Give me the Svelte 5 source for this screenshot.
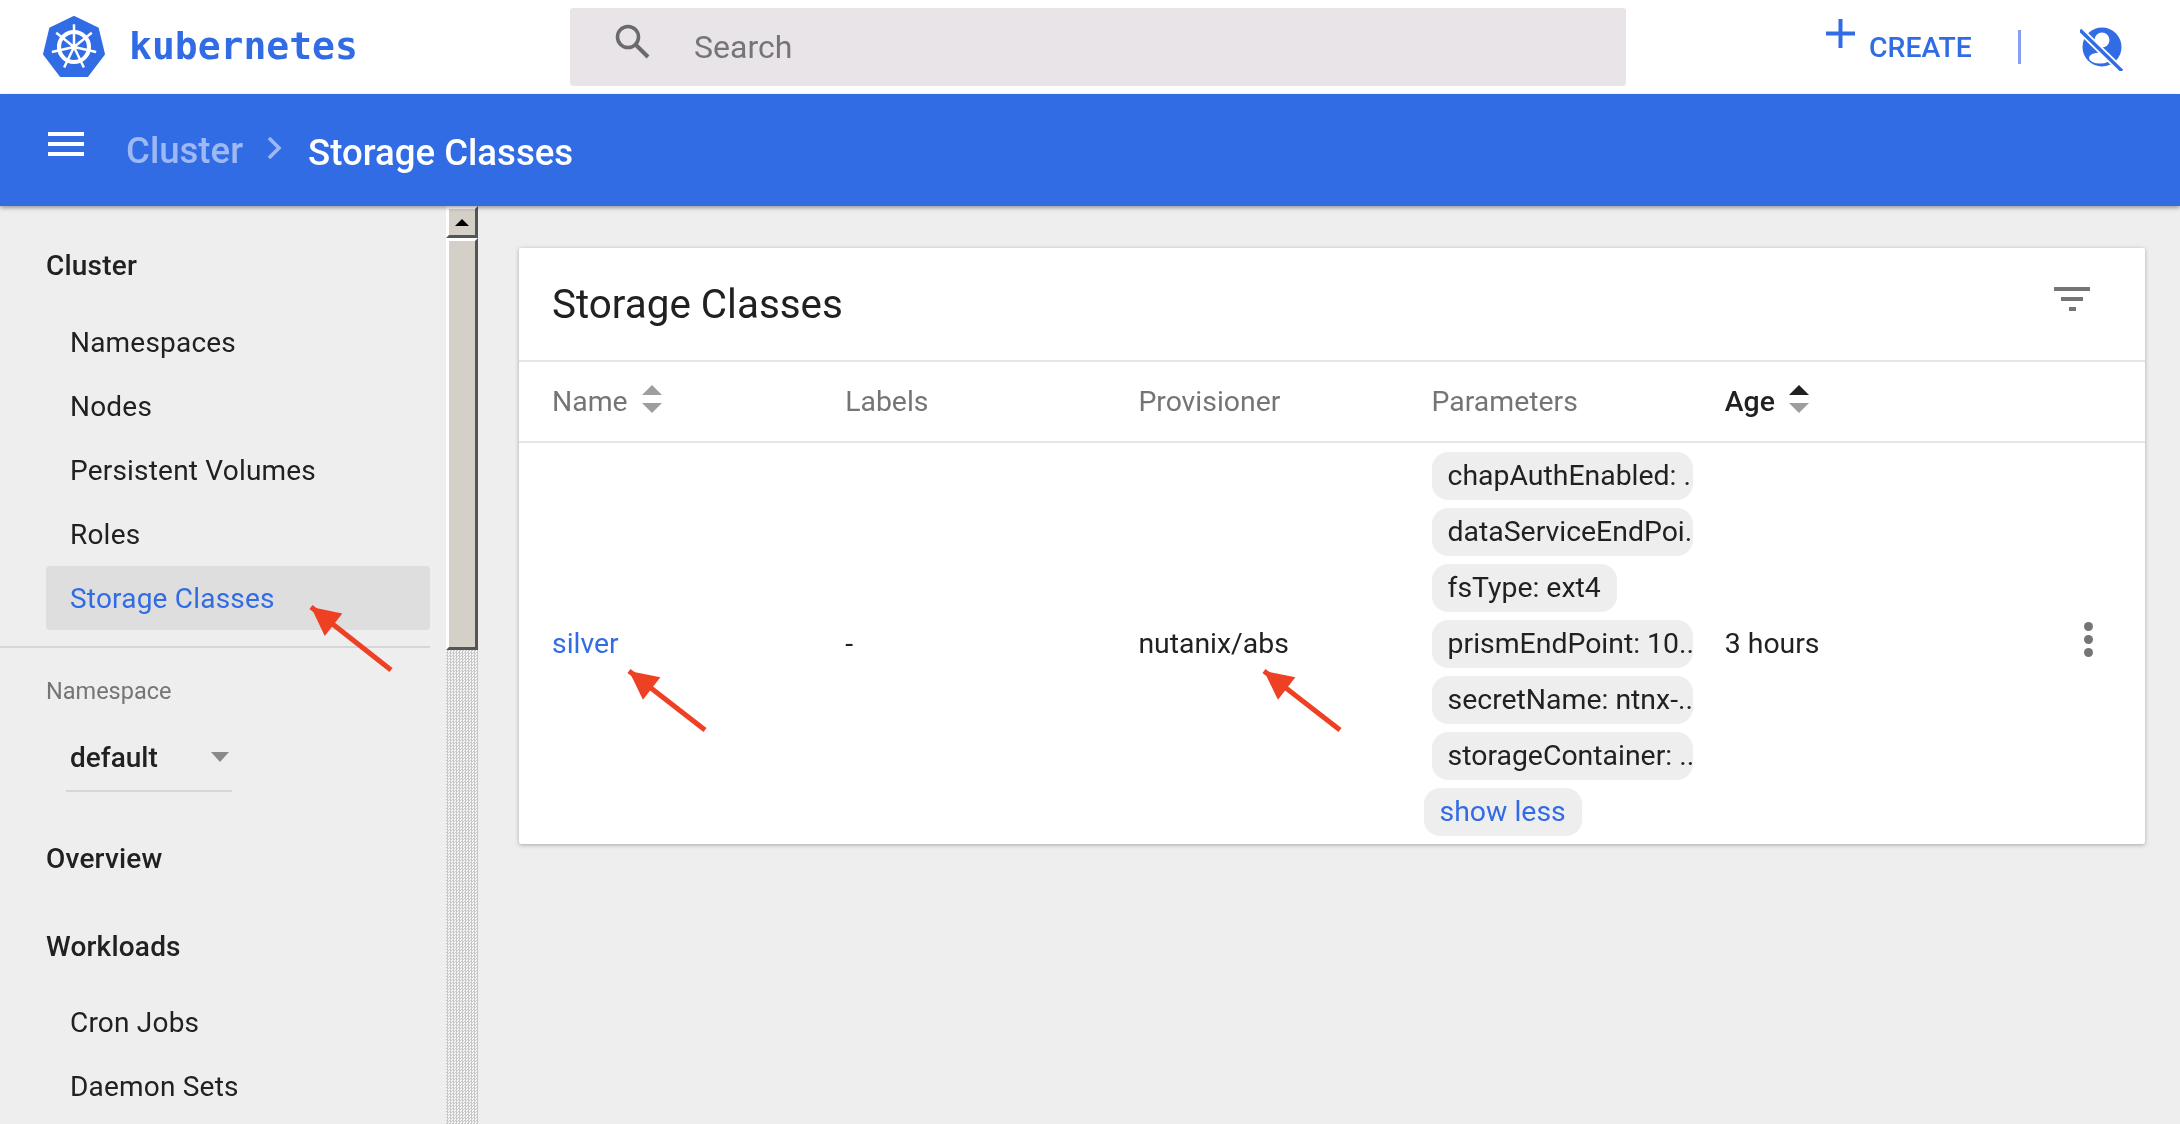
<script>
  const clusterItems = ['Namespaces', 'Nodes', 'Persistent Volumes', 'Roles'];
  const workloadItems = ['Cron Jobs', 'Daemon Sets'];
  const columns = [
    { label: 'Name', sort: 'none' },
    { label: 'Labels' },
    { label: 'Provisioner' },
    { label: 'Parameters' },
    { label: 'Age', sort: 'up' }
  ];
  const chips = [
    'chapAuthEnabled: ...',
    'dataServiceEndPoi...',
    'fsType: ext4',
    'prismEndPoint: 10...',
    'secretName: ntnx-...',
    'storageContainer: ...'
  ];
  const spokes = [0, 51.4, 102.9, 154.3, 205.7, 257.1, 308.6];
  const arrows = [
    { x1: 391, y1: 670, x2: 311, y2: 607 },
    { x1: 705, y1: 730, x2: 629, y2: 671 },
    { x1: 1340, y1: 730, x2: 1264, y2: 671 }
  ];
  function head(a) {
    const ang = Math.atan2(a.y1 - a.y2, a.x1 - a.x2);
    const l = 32, s = 0.46;
    const p = (t) => `${a.x2 + l * Math.cos(ang + t)},${a.y2 + l * Math.sin(ang + t)}`;
    return `${a.x2},${a.y2} ${p(s)} ${p(-s)}`;
  }
</script>

<div class="page">
  <header class="top">
    <div class="brand">
      <svg class="logo" viewBox="0 0 60 60" aria-hidden="true">
        <polygon points="30,1 53,12 59,37 43,58 17,58 1,37 7,12" fill="#326ce5" stroke="#326ce5" stroke-width="2" stroke-linejoin="round"/>
        <circle cx="30" cy="30" r="14.5" fill="none" stroke="#fff" stroke-width="4"/>
        <circle cx="30" cy="30" r="3" fill="#fff"/>
        {#each spokes as s}
          <line x1="30" y1="30" x2="30" y2="8" stroke="#fff" stroke-width="2.4" transform="rotate({s} 30 30)"/>
        {/each}
      </svg>
      <span class="word">kubernetes</span>
    </div>
    <div class="search">
      <svg class="search-icon" viewBox="0 0 40 40" aria-hidden="true">
        <circle cx="16" cy="15" r="10.5" fill="none" stroke="#6a6a6a" stroke-width="3.6"/>
        <line x1="24" y1="23" x2="36" y2="35" stroke="#6a6a6a" stroke-width="4"/>
      </svg>
      <span class="search-text">Search</span>
    </div>
    <div class="actions">
      <svg class="plus" viewBox="0 0 30 30" aria-hidden="true">
        <path d="M0 14.5H29M14.5 0V29" stroke="#326ce5" stroke-width="4"/>
      </svg>
      <span class="create">CREATE</span>
      <span class="vsep"></span>
      <svg class="user-off" viewBox="0 0 44 44" aria-hidden="true">
        <circle cx="22" cy="20" r="19.5" fill="#326ce5"/>
        <circle cx="22" cy="13" r="7.5" fill="#fff"/>
        <ellipse cx="20" cy="31" rx="11" ry="5.5" fill="#fff"/>
        <line x1="0" y1="3" x2="42" y2="44" stroke="#fff" stroke-width="7"/>
        <line x1="0" y1="3" x2="42" y2="44" stroke="#326ce5" stroke-width="3.4"/>
      </svg>
    </div>
  </header>

  <div class="crumbs">
    <div class="burger"><i></i><i></i><i></i></div>
    <span class="crumb-link">Cluster</span>
    <svg class="chev" viewBox="0 0 16 24" aria-hidden="true">
      <path d="M3 2L13 12L3 22" fill="none" stroke="#9db9f3" stroke-width="3.6"/>
    </svg>
    <span class="crumb-now">Storage Classes</span>
  </div>

  <div class="body">
    <aside class="side">
      <nav class="nav">
        <div class="nav-head first">Cluster</div>
        {#each clusterItems as item}
          <div class="nav-item">{item}</div>
        {/each}
        <div class="nav-item active">Storage Classes</div>
        <div class="rule"></div>
        <div class="ns-label">Namespace</div>
        <div class="ns-select">
          <span>default</span>
          <i class="caret"></i>
        </div>
        <div class="nav-head overview">Overview</div>
        <div class="nav-head">Workloads</div>
        {#each workloadItems as item}
          <div class="nav-item">{item}</div>
        {/each}
      </nav>
      <div class="scrollbar">
        <div class="sb-btn"><i></i></div>
        <div class="sb-thumb"></div>
      </div>
    </aside>

    <main class="main">
      <section class="card">
        <div class="card-title">
          <h1>Storage Classes</h1>
          <div class="filter"><i></i><i></i><i></i></div>
        </div>
        <div class="row head">
          {#each columns as c}
            <div class="cell" class:sorted={c.sort === 'up'}>
              <span>{c.label}</span>
              {#if c.sort}
                <span class="sort">
                  <i class="up" class:on={c.sort === 'up'}></i>
                  <i class="down"></i>
                </span>
              {/if}
            </div>
          {/each}
        </div>
        <div class="row data">
          <div class="cell"><span class="link">silver</span></div>
          <div class="cell">-</div>
          <div class="cell">nutanix/abs</div>
          <div class="cell chips">
            {#each chips as chip}
              <span class="chip">{chip}</span>
            {/each}
            <span class="chip more">show less</span>
          </div>
          <div class="cell">3 hours</div>
          <div class="kebab"><i></i><i></i><i></i></div>
        </div>
      </section>
    </main>
  </div>

  <svg class="overlay" width="2180" height="1124" aria-hidden="true">
    {#each arrows as a}
      <line x1={a.x1} y1={a.y1} x2={a.x2} y2={a.y2} stroke="#ee4023" stroke-width="5"/>
      <polygon points={head(a)} fill="#ee4023"/>
    {/each}
  </svg>
</div>

<style>
  :global(body) { margin: 0; background: #eee; }
  .page {
    position: relative;
    width: 2180px;
    height: 1124px;
    overflow: hidden;
    display: flex;
    flex-direction: column;
    font-family: Roboto, "Liberation Sans", sans-serif;
    font-size: 28px;
    color: #212121;
    background: #eee;
    filter: blur(.4px);
  }
  i { display: block; }

  .top {
    height: 94px;
    flex: none;
    display: flex;
    align-items: center;
    background: #fff;
  }
  .brand { width: 570px; display: flex; align-items: center; flex: none; }
  .logo { width: 62px; height: 62px; margin-left: 43px; flex: none; }
  .word {
    margin-left: 24px;
    font-family: "DejaVu Sans Mono", monospace;
    font-weight: bold;
    font-size: 38px;
    color: #326ce5;
    position: relative;
    top: -1px;
  }
  .search {
    width: 1056px;
    height: 78px;
    flex: none;
    display: flex;
    align-items: center;
    background: #e8e4e7;
    border-radius: 3px;
  }
  .search-icon { width: 40px; height: 40px; margin-left: 42px; flex: none; position: relative; top: -5px; }
  .search-text { margin-left: 42px; font-size: 32px; color: #757575; }
  .actions { flex: 1; display: flex; align-items: center; position: relative; }
  .plus { width: 30px; height: 30px; margin-left: 200px; flex: none; position: relative; top: -13px; }
  .create { margin-left: 13px; font-size: 28.4px; font-weight: 500; color: #326ce5; }
  .vsep { width: 3px; height: 34px; margin-left: 46px; background: #8a9cf5; flex: none; }
  .user-off { width: 44px; height: 44px; margin-left: 59px; flex: none; position: relative; top: 2px; }

  .crumbs {
    height: 112px;
    flex: none;
    display: flex;
    align-items: center;
    background: #326ce5;
    box-shadow: 0 2px 4px rgba(0, 0, 0, .35);
    position: relative;
    z-index: 2;
  }
  .burger { width: 36px; margin-left: 48px; display: flex; flex-direction: column; gap: 6px; flex: none; position: relative; top: -6px; }
  .burger i { height: 4px; background: #fff; }
  .crumb-link { margin-left: 42px; font-size: 36.6px; font-weight: 500; color: #9db9f3; }
  .chev { width: 16px; height: 24px; margin-left: 23px; flex: none; position: relative; top: -2px; }
  .crumb-now { margin-left: 26px; font-size: 36.6px; font-weight: 500; color: #fff; position: relative; top: 2px; }

  .body { flex: 1; display: flex; min-height: 0; }
  .side { width: 478px; flex: none; display: flex; overflow: hidden; }
  .nav { width: 446px; flex: none; }
  .nav-head {
    height: 88px;
    margin-left: 46px;
    display: flex;
    align-items: center;
    font-size: 28px;
    font-weight: 500;
    letter-spacing: .2px;
  }
  .nav-head.first { height: 104px; box-sizing: border-box; padding-top: 15px; }
  .nav-head.overview { margin-top: 22px; }
  .nav-item {
    height: 64px;
    margin-left: 46px;
    margin-right: 16px;
    padding-left: 24px;
    display: flex;
    align-items: center;
    font-size: 28px;
    letter-spacing: .2px;
    border-radius: 4px;
  }
  .nav-item.active { background: #dedede; color: #326ce5; }
  .rule { height: 2px; background: #d6d6d6; margin: 16px 16px 0 0; }
  .ns-label { margin: 28px 0 0 46px; font-size: 23.5px; line-height: 30px; color: #757575; }
  .ns-select {
    width: 166px;
    height: 68px;
    margin: 18px 0 0 66px;
    box-sizing: border-box;
    padding: 0 3px 0 4px;
    display: flex;
    align-items: center;
    justify-content: space-between;
    border-bottom: 2px solid #d6d6d6;
    font-size: 28px;
    font-weight: 500;
  }
  .caret {
    width: 0; height: 0;
    border-left: 9px solid transparent;
    border-right: 9px solid transparent;
    border-top: 10px solid #8a8a8a;
  }

  .scrollbar {
    width: 32px;
    height: 100%;
    flex: none;
    background: repeating-conic-gradient(#c8c8c8 0 25%, #f6f6f6 0 50%) 0 0 / 3px 3px;
  }
  .sb-btn, .sb-thumb {
    box-sizing: border-box;
    background: #d4d0c8;
    border-left: 3px solid #fff;
    border-top: 3px solid #fff;
    border-right: 3px solid #555;
    border-bottom: 3px solid #555;
  }
  .sb-btn { height: 32px; display: flex; align-items: center; justify-content: center; }
  .sb-btn i {
    width: 0; height: 0;
    border-left: 7px solid transparent;
    border-right: 7px solid transparent;
    border-bottom: 7px solid #000;
  }
  .sb-thumb { height: 412px; }

  .main { flex: 1; padding: 42px 35px 0 41px; min-width: 0; }
  .card {
    background: #fff;
    box-shadow: 0 1px 4px rgba(0, 0, 0, .3);
    border-radius: 2px;
  }
  .card-title {
    height: 112px;
    display: flex;
    align-items: center;
    justify-content: space-between;
    padding: 0 55px 0 33px;
    border-bottom: 2px solid #e6e4e6;
  }
  h1 { margin: 0; font-size: 40.4px; font-weight: 400; color: #212121; }
  .filter { display: flex; flex-direction: column; align-items: center; gap: 6px; position: relative; top: -5px; }
  .filter i { height: 4px; background: #757575; }
  .filter i:nth-child(1) { width: 36px; }
  .filter i:nth-child(2) { width: 22px; }
  .filter i:nth-child(3) { width: 7px; }

  .row {
    display: grid;
    grid-template-columns: repeat(5, 293.2px) 1fr;
    padding-left: 33px;
    align-items: center;
  }
  .row.head { height: 79px; border-bottom: 2px solid #e6e4e6; color: #757575; box-sizing: content-box; }
  .cell { display: flex; align-items: center; font-size: 28.4px; }
  .cell.sorted { color: #212121; font-weight: 500; }
  .sort { display: flex; flex-direction: column; gap: 8px; margin-left: 14px; position: relative; top: -3px; }
  .sort i {
    width: 0; height: 0;
    border-left: 10px solid transparent;
    border-right: 10px solid transparent;
  }
  .sort .up { border-bottom: 10px solid #9e9e9e; }
  .sort .up.on { border-bottom-color: #212121; }
  .sort .down { border-top: 10px solid #9e9e9e; }

  .row.data { height: 401px; }
  .link { color: #326ce5; }
  .chips {
    flex-direction: column;
    align-items: flex-start;
    gap: 8px;
  }
  .chip {
    box-sizing: border-box;
    max-width: 261px;
    height: 48px;
    padding: 0 16px;
    display: block;
    line-height: 48px;
    background: #eee;
    border-radius: 16px;
    white-space: nowrap;
    overflow: hidden;
  }
  .chip:not(.more):not(:nth-child(3)) { padding-right: 0; }
  .chip.more { margin-left: -8px; color: #326ce5; }
  .kebab { display: flex; flex-direction: column; gap: 4px; justify-self: end; margin-right: 52px; position: relative; top: -4px; }
  .kebab i { width: 9px; height: 9px; border-radius: 50%; background: #757575; }

  .overlay { position: absolute; left: 0; top: 0; pointer-events: none; z-index: 5; }
</style>
